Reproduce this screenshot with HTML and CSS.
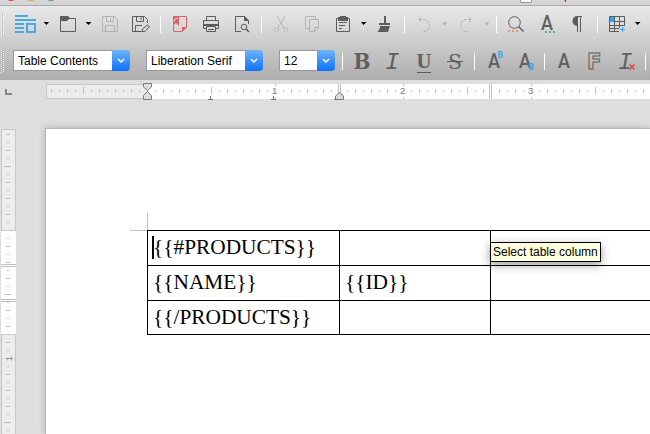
FILE: index.html
```html
<!DOCTYPE html>
<html lang="en">
<head>
<meta charset="utf-8">
<title>Writer</title>
<link rel="stylesheet" href="styles.css">
</head>
<body>
<div class="window">
<header class="titlebar">
<svg width="650" height="5" viewBox="0 0 650 5"><circle cx="11" cy="-5" r="6" fill="#e4453c"/><circle cx="31" cy="-5" r="6" fill="#e8a03a"/><circle cx="51" cy="-5" r="6" fill="#4eae35"/><path d="M520.500 0V2.500H531.500V0" fill="#fff" stroke="#999"/><path d="M565.500 0V2" stroke="#555d88"/><path d="M564.500 0V2" stroke="#d2a779"/></svg>
</header>
<div class="toolbars">
<nav class="bar standard">
<svg width="8" height="36" viewBox="0 6 8 36"><path d="M1.500 13V36M3.500 14V36" stroke="#fff" stroke-dasharray="1 1"/><path d="M2.500 13V36" stroke="#aaa" stroke-dasharray="1 1"/></svg>
<svg width="32" height="36" viewBox="8 6 32 36"><path d="M15 16H28M15 20H36M15 24H24M15 28H24M15 32H24" stroke="#4aa9dd" stroke-width="2"/><path d="M27 24H35V32H27Z" fill="none" stroke="#4aa9dd" stroke-width="2"/></svg>
<svg width="16" height="36" viewBox="40 6 16 36"><path d="M43.500 22H49L46.500 25Z"/></svg>
<svg width="24" height="36" viewBox="56 6 24 36"><path d="M60.500 16.500H67L69 18.500H75.500V31.500H60.500Z" class="ln"/><path d="M60 16H68L70 18L67 21H60Z" class="ink"/></svg>
<svg width="18" height="36" viewBox="80 6 18 36"><path d="M85.500 22H91.500L88.500 25Z"/></svg>
<svg width="26" height="36" viewBox="98 6 26 36" class="dim"><path d="M102.500 16.500H114.500L117.500 19.500V31.500H102.500ZM106.500 16.500V21.500H113.500V16.500M105.500 31.500V25.500H114.500V31.500M110.500 18V21" class="ln"/></svg>
<svg width="32" height="36" viewBox="124 6 32 36"><path d="M142 31.500H132.500V16.500H144.500L147.500 19.500V23M136.500 16.500V21.500H143.500V16.500M135.500 31.500V25.500H142M141 17V20" class="ln"/><path d="M142.500 31.500V29L147.500 25L149.500 26.500L145 31.500Z" class="ln"/></svg>
<svg width="10" height="36" viewBox="156 6 10 36"><path d="M160.500 16V33" class="sep"/></svg>
<svg width="28" height="36" viewBox="166 6 28 36"><path d="M179 16.500H186.500V27L182 31.500H173.500V26" fill="none" stroke="#dc626a"/><path d="M182 32V27H187Z" fill="#dc626a"/><path d="M173 16H179V26L176 23L173 26Z" fill="#dc626a"/><path d="M174 22L175 19L178 18" stroke="#f4c8cb" fill="none"/></svg>
<svg width="32" height="36" viewBox="194 6 32 36"><path d="M206.500 20V16.500H215.500V20M206.500 28.500H203.500V20.500H218.500V28.500H215.500M206.500 26.500H215.500V31.500H206.500Z" class="ln"/><path d="M203.500 24.500H218.500M208 29.500H214" class="ln"/><path d="M203 25H219V26H203Z" class="ink"/></svg>
<svg width="30" height="36" viewBox="226 6 30 36"><path d="M241 31.500H235.500V16.500H245L248.500 20.500V24" class="ln"/><path d="M244 16V21H249Z" class="ink"/><circle cx="244" cy="27" r="2.800" class="ln"/><path d="M246 29L249 32" class="ln" stroke-width="1.500"/></svg>
<svg width="12" height="36" viewBox="256 6 12 36"><path d="M261.500 16V33" class="sep"/></svg>
<svg width="28" height="36" viewBox="268 6 28 36" class="dim"><path d="M277 16L284 28M285 16L278 28" class="ln" stroke-dasharray="3 .6"/><circle cx="276.500" cy="29.500" r="2" class="ln" stroke-dasharray="2 1"/><circle cx="285.500" cy="29.500" r="2" class="ln" stroke-dasharray="2 1"/></svg>
<svg width="30" height="36" viewBox="296 6 30 36" class="dim"><path d="M309 28.500H305.500V16.500H315.500V19M309.500 19.500H318.500V28L315 31.500H309.500ZM314.500 31V27.500H318" class="ln"/></svg>
<svg width="30" height="36" viewBox="326 6 30 36"><path d="M336.500 18.500H349.500V31.500H336.500Z" class="ln"/><path d="M338 17H340V16H346V17H348V21H338Z" class="ink"/><path d="M339 22.500H347M339 25.500H345M339 28.500H342" class="ln"/></svg>
<svg width="16" height="36" viewBox="356 6 16 36"><path d="M361 22H366.500L363.500 25Z"/></svg>
<svg width="26" height="36" viewBox="372 6 26 36"><path d="M384 16H386V23H390V25H379V23H384ZM380 26H390L388 32H377Q380 30 380 26Z" class="ink"/></svg>
<svg width="12" height="36" viewBox="398 6 12 36"><path d="M404.500 16V33" class="sep"/></svg>
<svg width="26" height="36" viewBox="410 6 26 36" class="dim"><path d="M421 17L418.500 19.500L421 22M419 19.500H424A5.500 6 0 0 1 424 31.500H422" class="ln" stroke-dasharray="3 1"/></svg>
<svg width="18" height="36" viewBox="436 6 18 36"><path d="M442 22.500H447.500L444.500 25.500Z" fill="#b2b2b2"/></svg>
<svg width="24" height="36" viewBox="454 6 24 36" class="dim"><path d="M469 17L471.500 19.500L469 22M471 19.500H466A5.500 6 0 0 0 466 31.500H468" class="ln" stroke-dasharray="3 1"/></svg>
<svg width="14" height="36" viewBox="478 6 14 36"><path d="M484 22.500H489.500L486.500 25.500Z" fill="#b2b2b2"/></svg>
<svg width="9" height="36" viewBox="492 6 9 36"><path d="M496.500 16V33" class="sep"/></svg>
<svg width="30" height="36" viewBox="501 6 30 36"><circle cx="514.500" cy="22.500" r="5.800" class="ln"/><path d="M518.500 26.500L523.500 31.500" class="ln" stroke-width="1.500"/><path d="M508 31H519" stroke="#e9906c" stroke-width="2" stroke-dasharray="2 2"/></svg>
<svg width="32" height="36" viewBox="531 6 32 36"><text x="541" y="30" textLength="12" lengthAdjust="spacingAndGlyphs" class="sans">A</text><path d="M545 32H555" stroke="#56b877" stroke-width="2" stroke-dasharray="2 2"/></svg>
<svg width="28" height="36" viewBox="563 6 28 36"><path d="M582 16V17H581V32H580V17H578V32H577V26A4.800 5 0 0 1 577.500 16Z" class="ink"/></svg>
<svg width="12" height="36" viewBox="591 6 12 36"><path d="M597.500 16V33" class="sep"/></svg>
<svg width="28" height="36" viewBox="603 6 28 36"><path d="M619 31.500H609.500V16.500H624.500V26M609.500 21.500H624.500M609.500 25.500H624.500M609.500 28.500H619M614.500 16V32M619.500 16V28" class="ln"/><path d="M610 17H614V22H610Z" fill="#37a5ee"/><path d="M622.500 27V32M620 29.500H625" stroke="#37a5ee"/></svg>
<svg width="19" height="36" viewBox="631 6 19 36"><path d="M635 22H640.500L637.500 25Z"/></svg>
</nav>
<nav class="bar formatting">
<svg width="13" height="38" viewBox="0 42 13 38"><path d="M1.500 50V73M3.500 51V73" stroke="#fff" stroke-dasharray="1 1"/><path d="M2.500 50V73" stroke="#999" stroke-dasharray="1 1"/></svg>
<div class="combo wide"><span>Table Contents</span><i><svg width="18" height="20" viewBox="0 0 18 20"><path d="M6 9L9 12L12 9"/></svg></i></div>
<div class="combo wide"><span>Liberation Serif</span><i><svg width="18" height="20" viewBox="0 0 18 20"><path d="M6 9L9 12L12 9"/></svg></i></div>
<div class="combo size"><span>12</span><i><svg width="18" height="20" viewBox="0 0 18 20"><path d="M6 9L9 12L12 9"/></svg></i></div>
<svg width="315" height="38" viewBox="335 42 315 38">
<path d="M342.500 53V70M474.500 53V70M544.500 53V70M645.500 53V70" class="sep"/>
<text x="353.500" y="69" textLength="17" lengthAdjust="spacingAndGlyphs" class="slab bold" font-size="22">B</text>
<text x="385" y="69" class="slant">I</text>
<text x="416.500" y="68" textLength="15" lengthAdjust="spacingAndGlyphs" class="serif bold" font-size="22">U</text><path d="M417 72.500H431" class="ln"/>
<text x="448" y="69" textLength="14" lengthAdjust="spacingAndGlyphs" class="slab" font-size="21">S</text><path d="M447 61.500H463" class="ln"/>
<text x="488" y="68" textLength="12" lengthAdjust="spacingAndGlyphs" class="sans">A</text><text x="497.500" y="58" class="tag">B</text>
<text x="519" y="68" textLength="12" lengthAdjust="spacingAndGlyphs" class="sans">A</text><text x="528.500" y="70" class="tag">B</text>
<text x="558" y="68" textLength="12" lengthAdjust="spacingAndGlyphs" class="sans">A</text>
<text x="587" y="69" textLength="14.500" lengthAdjust="spacingAndGlyphs" class="hollow">F</text>
<text x="618" y="69" class="slant">I</text><path d="M629.500 64.500L634.500 69.500M634.500 64.500L629.500 69.500" stroke="#d9575f" stroke-width="1.800"/>
</svg>
</nav>
</div>
<main class="workspace">
<div class="ruler-row">
<svg class="tabkind" width="46" height="24" viewBox="0 80 46 24"><path d="M6 89V94H12" fill="none" stroke="#888" stroke-width="2"/></svg>
<svg width="604" height="24" viewBox="46 80 604 24">
<rect x="46" y="84" width="102" height="15" fill="#c8c8c8"/><rect x="47" y="85" width="100" height="13" fill="#ececec"/>
<rect x="148" y="84" width="502" height="15" fill="#fff"/>
<g stroke="#bfbfbf"><path d="M59 91H140" stroke-width="2" stroke-dasharray="1 15"/><path d="M51 91H140" stroke-width="4" stroke-dasharray="1 15"/><path d="M155 91H650" stroke-width="2" stroke-dasharray="1 15"/><path d="M163 91H650" stroke-width="4" stroke-dasharray="1 15"/><path d="M83.500 87V94"/><path d="M211 90.500H650" stroke-width="7" stroke-dasharray="1 127"/></g>
<path d="M270 86H280V97H270ZM336 86H342V97H336ZM398 86H408V97H398ZM488 86H493V97H488ZM526 86H536V97H526Z" fill="#fff"/>
<path d="M275.500 84V86M275.500 97V99M403.500 84V86M403.500 97V99M531.500 84V86M531.500 97V99M338.500 84V99M340.500 84V99M489.500 84V99M491.500 84V99" stroke="#c5c5c5"/>
<g class="num"><text x="272" y="94">1</text><text x="400" y="94">2</text><text x="528" y="94">3</text></g>
<g fill="#ddd" stroke="#7a7a7a"><path d="M143.500 83.500H151.500V87L147.500 90.500L143.500 87Z"/><path d="M143.500 99.500H151.500V95.500L147.500 91.500L143.500 95.500Z"/><path d="M335.500 99.500H343.500V96L339.500 92.500L335.500 96Z"/></g>
<path d="M208 99.500H213M210.500 96V99M271 99.500H276M273.500 96V99M334 99.500H339" stroke="#777"/>
</svg>
</div>
<div class="doc-row">
<svg class="vruler" width="45" height="330" viewBox="0 104 45 330">
<rect x="1" y="129" width="15" height="102" fill="#c8c8c8"/><rect x="2" y="130" width="13" height="100" fill="#ececec"/>
<rect x="1" y="231" width="15" height="103" fill="#fff"/>
<rect x="1" y="334" width="15" height="100" fill="#c8c8c8"/><rect x="2" y="335" width="13" height="99" fill="#ececec"/>
<g stroke="#bfbfbf"><path d="M7 142.500h2m-2 16h2m-2 16h2m-2 16h2m-2 16h2m-2 16h2m-2 16h2m-2 16h2m-2 16h2m-2 16h2m-2 16h2m-2 16h2m-2 16h2m-2 32h2m-2 16h2m-2 16h2m-2 16h2m-2 16h2m-2 16h2"/><path d="M6 134.500h4m-4 16h4m-4 32h4m-4 16h4m-4 16h4m-4 32h4m-4 16h4m-4 16h4m-4 32h4m-4 16h4m-4 16h4m-4 32h4m-4 16h4m-4 16h4"/><path d="M4 166.500H11M4 294.500H11M4 422.500H11"/><path d="M7 350.500h2M1 264.500H16M1 266.500H16M1 299.500H16M1 301.500H16M2 358.500H3M14 358.500H15"/></g>
<text class="num" text-anchor="middle" transform="translate(11.500 358.500) rotate(-90)">1</text>
</svg>
<article class="page">
<div class="guides"></div>
<div class="table">
<div><span class="caret"></span>{{#PRODUCTS}}</div><div></div><div></div>
<div>{{NAME}}</div><div>{{ID}}</div><div></div>
<div>{{/PRODUCTS}}</div><div></div><div></div>
</div>
<div class="tooltip">Select table column</div>
</article>
</div>
</main>
</div>
</body>
</html>
```
FILE: styles.css
```css
* { box-sizing: border-box; }
body { margin: 0; }
.window { width: 650px; height: 434px; overflow: hidden; background: #dededc; font-family: "Liberation Sans", sans-serif; }
svg { display: block; flex: none; }
.titlebar { height: 6px; background: #d5d5d5; border-bottom: 1px solid #aaa; }
.toolbars { height: 74px; background: linear-gradient(#e9e9e9, #cfcfcf 45%, #adadad); }
.bar { display: flex; }
.standard { height: 36px; }
.formatting { height: 38px; }
.ln { fill: none; stroke: #5c5c5c; }
.ink { fill: #5c5c5c; }
.dim .ln { stroke: #b2b2b2; }
.sep { stroke: #fff; }
text { fill: #606060; }
.sans { font: 500 20px Roboto, sans-serif; }
.serif { font-family: "Liberation Serif", serif; }
.slab { font-family: "DejaVu Serif", serif; }
.bold { font-weight: bold; }
.slant { font: italic 24px "Liberation Mono", monospace; }
.tag { font: bold 8.500px Roboto, sans-serif; fill: #37a5ee; }
.hollow { font: bold 21px "DejaVu Sans", sans-serif; fill: none; stroke: #606060; }
.combo { display: flex; height: 21px; margin: 8px 16px 0 0; background: #fff; border: 1px solid #999; border-right: 0; border-radius: 0 4px 4px 0; font-size: 12px; line-height: 20px; color: #000; flex: none; }
.combo span { flex: 1; padding-left: 4px; white-space: nowrap; }
.combo i { width: 18px; height: 21px; margin-top: -1px; border-radius: 0 4px 4px 0; background: linear-gradient(#6db3fa, #0d72fa); }
.combo path { fill: none; stroke: #fff; stroke-width: 1.5px; }
.wide { width: 117px; }
.size { width: 56px; margin-right: 0; }
.workspace { height: 354px; }
.ruler-row, .doc-row { display: flex; }
.num { font: 9.500px "Liberation Sans", sans-serif; fill: #777; }
.num text { fill: #777; }
.page { position: relative; flex: none; width: 605px; height: 306px; margin-top: 24px; padding: 84px 0 0 84px; background: #fff; border: solid #b7b7b5; border-width: 1px 0 0 1px; box-shadow: 0 0 7px rgba(0, 0, 0, .2); }
.guides { width: 18px; height: 18px; border: solid #bfbfbf; border-width: 0 1px 1px 0; }
.table { display: grid; grid-template-columns: 192px 151px 160px; grid-template-rows: 35px 35px 35px; margin: -1px 0 0 17px; width: 503px; font: 21.330px/33px "Liberation Serif", serif; color: #000; }
.table div { position: relative; padding-left: 5px; border: solid #000; border-width: 1px 0 0 1px; white-space: nowrap; }
.table div:nth-child(n+7) { border-bottom-width: 1px; }
.caret { position: absolute; left: 4px; top: 5px; width: 2px; height: 23px; background: #000; }
.tooltip { position: absolute; left: 444px; top: 113px; width: 111px; height: 20px; padding-left: 2px; background: #ffffe0; border: 1px solid #000; box-shadow: 0 3px 10px rgba(0, 0, 0, .4); font-size: 12px; line-height: 19px; white-space: nowrap; }
```
